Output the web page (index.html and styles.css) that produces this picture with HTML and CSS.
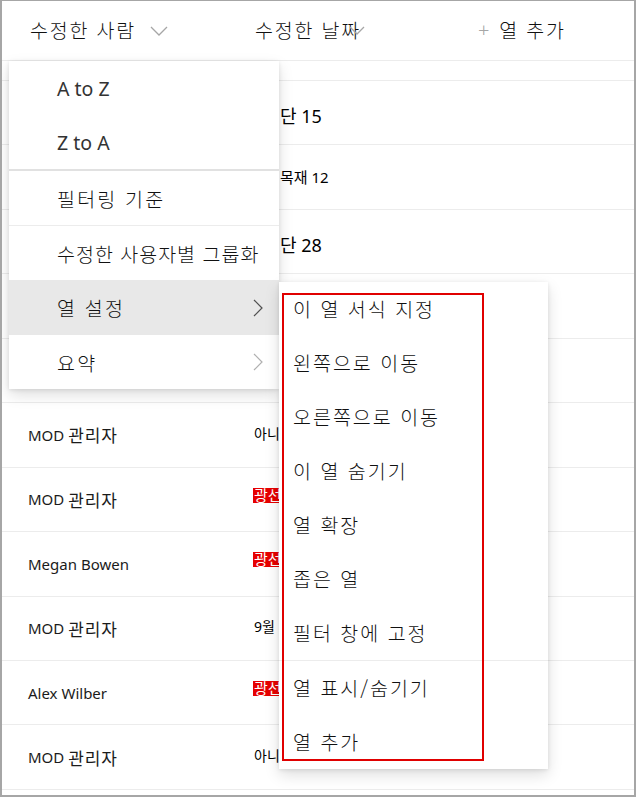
FILE: index.html
```html
<!DOCTYPE html>
<html lang="ko">

<head>
    <meta charset="UTF-8">
    <meta name="viewport" content="width=device-width, initial-scale=1.0">
    <title>열 설정</title>
    <link rel="stylesheet" href="styles.css">
</head>

<body>
    <div class="frame">
        <div class="list">
            <div class="row head">
                <div class="cell c1">수정한 사람
                    <svg class="down" width="18" height="10" viewBox="0 0 18 10"><path d="M1 1 L9 9 L17 1" fill="none" stroke="#a6a6a6" stroke-width="1.3"/></svg>
                </div>
                <div class="cell c2">수정한 날짜<svg class="down overlap" width="16" height="10" viewBox="0 0 16 10"><path d="M1 1 L8 8 L15 1" fill="none" stroke="#a6a6a6" stroke-width="1.3"/></svg></div>
                <div class="cell c3"><span class="plus">+</span>열 추가</div>
            </div>
            <div class="row stub"></div>

            <div class="row"><div class="cell c1"></div><div class="cell c2"><span class="big">단 15</span></div><div class="cell c3"></div></div>
            <div class="row"><div class="cell c1"></div><div class="cell c2"><span class="mid">목재 12</span></div><div class="cell c3"></div></div>
            <div class="row"><div class="cell c1"></div><div class="cell c2"><span class="big">단 28</span></div><div class="cell c3"></div></div>
            <div class="row"><div class="cell c1"></div><div class="cell c2"></div><div class="cell c3"></div></div>
            <div class="row"><div class="cell c1"></div><div class="cell c2"></div><div class="cell c3"></div></div>

            <div class="row"><div class="cell c1">MOD <span class="ko">관리자</span></div><div class="cell c2"><span class="small">아니요</span></div><div class="cell c3"></div></div>
            <div class="row"><div class="cell c1">MOD <span class="ko">관리자</span></div><div class="cell c2"><span class="badge">광선사</span></div><div class="cell c3"></div></div>
            <div class="row"><div class="cell c1">Megan Bowen</div><div class="cell c2"><span class="badge">광선사</span></div><div class="cell c3"></div></div>
            <div class="row"><div class="cell c1">MOD <span class="ko">관리자</span></div><div class="cell c2"><span class="small">9월</span></div><div class="cell c3"></div></div>
            <div class="row"><div class="cell c1">Alex Wilber</div><div class="cell c2"><span class="badge">광선사</span></div><div class="cell c3"></div></div>
            <div class="row"><div class="cell c1">MOD <span class="ko">관리자</span></div><div class="cell c2"><span class="small">아니요</span></div><div class="cell c3"></div></div>
            <div class="row"></div>
        </div>

        <!-- column header menu -->
        <div class="menu">
            <div class="item latin">A to Z</div>
            <div class="item latin">Z to A</div>
            <div class="sep thick"></div>
            <div class="item">필터링 기준</div>
            <div class="sep"></div>
            <div class="item tight">수정한 사용자별 그룹화</div>
            <div class="item hover">열 설정
                <svg class="right" width="10" height="18" viewBox="0 0 10 18"><path d="M1 1 L9 9 L1 17" fill="none" stroke="#505050" stroke-width="1.2"/></svg>
            </div>
            <div class="item">요약
                <svg class="right" width="10" height="18" viewBox="0 0 10 18"><path d="M1 1 L9 9 L1 17" fill="none" stroke="#b0b0b0" stroke-width="1.2"/></svg>
            </div>
        </div>

        <div class="submenu">
            <div class="item">이 열 서식 지정</div>
            <div class="item">왼쪽으로 이동</div>
            <div class="item">오른쪽으로 이동</div>
            <div class="item">이 열 숨기기</div>
            <div class="item">열 확장</div>
            <div class="item">좁은 열</div>
            <div class="item">필터 창에 고정</div>
            <div class="sep"></div>
            <div class="item">열 표시/숨기기</div>
            <div class="item">열 추가</div>
        </div>

        <div class="mark"></div>
    </div>
</body>

</html>
```

FILE: styles.css
```css
body {
    margin: 0;
    background: #fff;
    font-family: "Noto Sans", "Noto Sans CJK KR", sans-serif;
    color: #000;
}

.frame {
    position: relative;
    width: 636px;
    height: 797px;
    box-sizing: border-box;
    border: 2px solid #a6a6a6;
    border-top-width: 1px;
    overflow: hidden;
}

.row {
    display: grid;
    grid-template-columns: 250px 226px 1fr;
    height: 64.45px;
    box-sizing: border-box;
    border-bottom: 1px solid #ececec;
}

.row.head {
    height: 60px;
}

.row.stub {
    height: 20px;
}

.cell {
    display: flex;
    align-items: center;
    overflow: hidden;
    white-space: nowrap;
}

.c1 {
    padding-left: 26px;
    font-size: 15px;
    color: #1b1b1b;
}

.c1 .ko {
    font-size: 17px;
    letter-spacing: 0.8px;
    margin-left: 4px;
}

.c2 {
    padding-left: 1px;
}

/* header */
.head .cell {
    font-family: "Noto Sans CJK KR", sans-serif;
    font-weight: 300;
    font-size: 19.5px;
    letter-spacing: 1.8px;
    color: #111;
    padding-bottom: 2px;
}

.head .c1 {
    padding-left: 28px;
}

.head .c2 {
    padding-left: 3px;
}

.down {
    margin-left: 14px;
    margin-top: 2px;
}

.down.overlap {
    margin-left: -12px;
}

.plus {
    color: #a6a6a6;
    font-family: "Noto Sans", sans-serif;
    font-weight: 300;
    font-size: 20px;
    margin-right: 8px;
}

/* cell values */
.big {
    font-size: 18px;
    padding-left: 27px;
    margin-top: 4px;
}

.mid {
    font-size: 15px;
    padding-left: 27px;
    margin-top: -2px;
}

.small {
    font-size: 14px;
    padding-left: 1px;
    margin-top: -4px;
}

.badge {
    background: #e60000;
    color: #fff;
    font-size: 15px;
    line-height: 15px;
    height: 15px;
    padding: 0 1px;
    margin-top: -8px;
}

/* menus */
.menu,
.submenu {
    position: absolute;
    background: #fff;
    box-shadow: 0 6px 14px rgba(0, 0, 0, 0.13), 0 1px 4px rgba(0, 0, 0, 0.1);
    font-family: "Noto Sans CJK KR", sans-serif;
    font-weight: 300;
    font-size: 19.5px;
    letter-spacing: 2.2px;
    color: #111;
}

.menu {
    left: 7px;
    top: 60px;
    width: 270px;
}

.menu .item {
    display: flex;
    align-items: center;
    justify-content: space-between;
    height: 54px;
    padding: 0 16px 0 48px;
    white-space: nowrap;
}

.menu .item.latin {
    font-family: "Noto Sans", sans-serif;
    font-weight: 400;
    letter-spacing: 0;
    color: #333;
}

.menu .item.tight {
    letter-spacing: 1px;
}

.menu .item.hover {
    background: #e8e8e8;
    height: 55px;
}

.sep {
    height: 1px;
    background: #ececec;
}

.sep.thick {
    height: 2px;
    background: #e1e1e1;
}

.submenu {
    left: 277px;
    top: 281px;
    width: 269px;
    letter-spacing: 2px;
}

.submenu .item {
    display: flex;
    align-items: center;
    height: 54px;
    padding-left: 14px;
    padding-bottom: 2px;
    box-sizing: border-box;
}

.mark {
    position: absolute;
    left: 280px;
    top: 292px;
    width: 202px;
    height: 468px;
    box-sizing: border-box;
    border: 2px solid #e00000;
}
```
